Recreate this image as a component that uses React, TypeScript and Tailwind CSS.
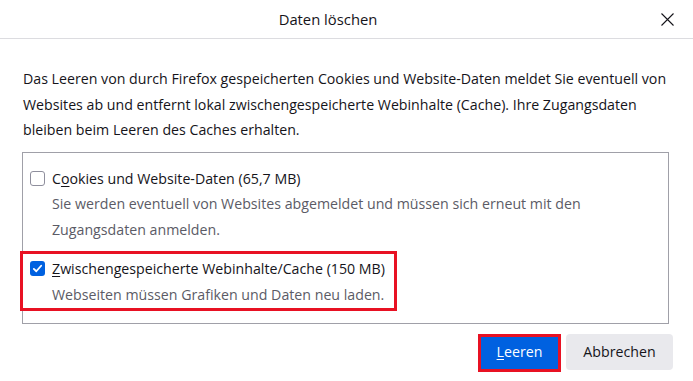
import { ReactNode } from "react";

function CheckBox({ checked }: { checked: boolean }) {
  if (checked) {
    return (
      <span className="flex h-[15px] w-[15px] items-center justify-center rounded-[3px] bg-[#0061e0]">
        <svg className="h-[11px] w-[11px]" viewBox="0 0 12 12" fill="none">
          <path d="M2 6.4L4.7 9L10 3" stroke="white" strokeWidth={2} strokeLinecap="round" strokeLinejoin="round" />
        </svg>
      </span>
    );
  }
  return <span className="block h-[15px] w-[15px] rounded-[3px] border-[1.5px] border-[#8f8f9d] bg-white" />;
}

function Option({ checked, label, children }: { checked: boolean; label: ReactNode; children: ReactNode }) {
  return (
    <div className="flex items-start gap-[7px]">
      <div className="flex h-[25px] items-center">
        <CheckBox checked={checked} />
      </div>
      <div className="leading-[25.5px]">
        <div className="text-[#15141a]">{label}</div>
        <div className="text-[#5b5b66]">{children}</div>
      </div>
    </div>
  );
}

export default function App() {
  return (
    <div
      className="flex h-[381px] w-[693px] flex-col bg-white text-[14.2px] text-[#15141a]"
      style={{ fontFamily: '"Open Sans", "Noto Sans", sans-serif' }}
    >
      {/* Header */}
      <div className="flex h-[39px] shrink-0 items-center border-b border-[#dcdce0]">
        <div className="flex-1 pl-[1px] text-center text-[14.8px]">Daten löschen</div>
        <button className="mr-[14px] flex h-[24px] w-[24px] items-center justify-center">
          <svg className="h-[13px] w-[13px]" viewBox="0 0 13 13" fill="none">
            <path d="M0.5 0.5L12.5 12.5M12.5 0.5L0.5 12.5" stroke="#15141a" strokeWidth={1.1} />
          </svg>
        </button>
      </div>

      {/* Body */}
      <div className="flex flex-1 flex-col px-[22px] pt-[27px]">
        <p className="pl-[1px] leading-[25.5px]">
          Das Leeren von durch Firefox gespeicherten Cookies und Website-Daten meldet Sie eventuell von
          <br />
          Websites ab und entfernt lokal zwischengespeicherte Webinhalte (Cache). Ihre Zugangsdaten
          <br />
          bleiben beim Leeren des Caches erhalten.
        </p>

        <div className="mt-[9px] flex h-[172px] w-[647px] flex-col border border-[#a0a0a8] pl-[7px] pt-[13px]">
          <Option
            checked={false}
            label={
              <>
                C<span className="underline underline-offset-2">o</span>okies und Website-Daten (65,7 MB)
              </>
            }
          >
            Sie werden eventuell von Websites abgemeldet und müssen sich erneut mit den
            <br />
            Zugangsdaten anmelden.
          </Option>

          <div className="relative mt-[14px] w-fit pr-[12px]">
            <Option
              checked={true}
              label={
                <>
                  <span className="underline underline-offset-2">Z</span>wischengespeicherte Webinhalte/Cache (150 MB)
                </>
              }
            >
              Webseiten müssen Grafiken und Daten neu laden.
            </Option>
            <div className="pointer-events-none absolute -bottom-[4px] -left-[10px] -top-[5px] right-0 border-[3px] border-[#e81123]" />
          </div>
        </div>

        {/* Buttons */}
        <div className="mt-[10px] flex justify-end gap-[6px]">
          <div className="relative">
            <button className="h-[36px] w-[81px] rounded-[4px] bg-[#0061e0] text-white">
              <span className="underline underline-offset-2">L</span>eeren
            </button>
            <div className="pointer-events-none absolute -bottom-[2px] -left-[1px] -right-[1px] top-0 border-[3px] border-[#e81123]" />
          </div>
          <button className="mr-[-2px] h-[36px] w-[107px] rounded-[4px] bg-[#e9e9ed] text-[#15141a]">Abbrechen</button>
        </div>
      </div>
    </div>
  );
}
